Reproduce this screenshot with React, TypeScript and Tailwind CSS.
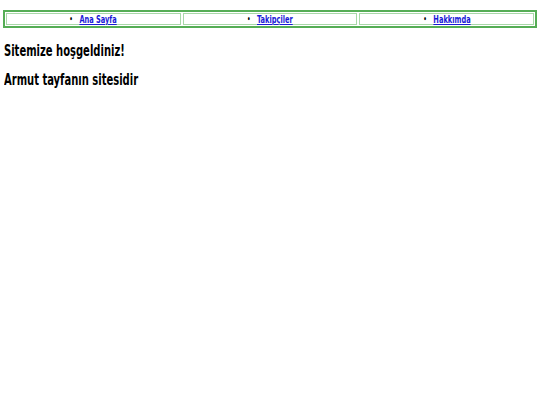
const links = ['Ana Sayfa', 'Takipçiler', 'Hakkımda'];

export default function App() {
  return (
    <div className="min-h-[405px] bg-white text-black [font-family:'DejaVu_Sans_Condensed','DejaVu_Sans',sans-serif]">
      {/* Menu */}
      <div className="px-[3px] pt-[10px]">
        <div className="flex gap-[2px] border-2 border-[#55ad55] p-[1px]">
          {links.map((label) => (
            <div
              key={label}
              className="flex h-[12px] flex-1 items-center justify-center border border-[#a8d8a8] pt-[1px] text-[11px] font-bold leading-[10px]"
            >
              <span className="inline-flex scale-x-[0.67] items-center whitespace-nowrap">
                <span className="mr-[10px] text-[8px] text-black">•</span>
                <a href="#" className="text-[#1a1ad6] underline">
                  {label}
                </a>
              </span>
            </div>
          ))}
        </div>
      </div>

      {/* Content */}
      <div className="px-[4px] pt-[14px]">
        <h2 className="text-[15px] font-bold leading-[18px]">
          <span className="inline-block origin-left scale-x-[0.74] whitespace-nowrap">Sitemize hoşgeldiniz!</span>
        </h2>
        <h2 className="mt-[11px] text-[15px] font-bold leading-[18px]">
          <span className="inline-block origin-left scale-x-[0.74] whitespace-nowrap">Armut tayfanın sitesidir</span>
        </h2>
      </div>
    </div>
  );
}
